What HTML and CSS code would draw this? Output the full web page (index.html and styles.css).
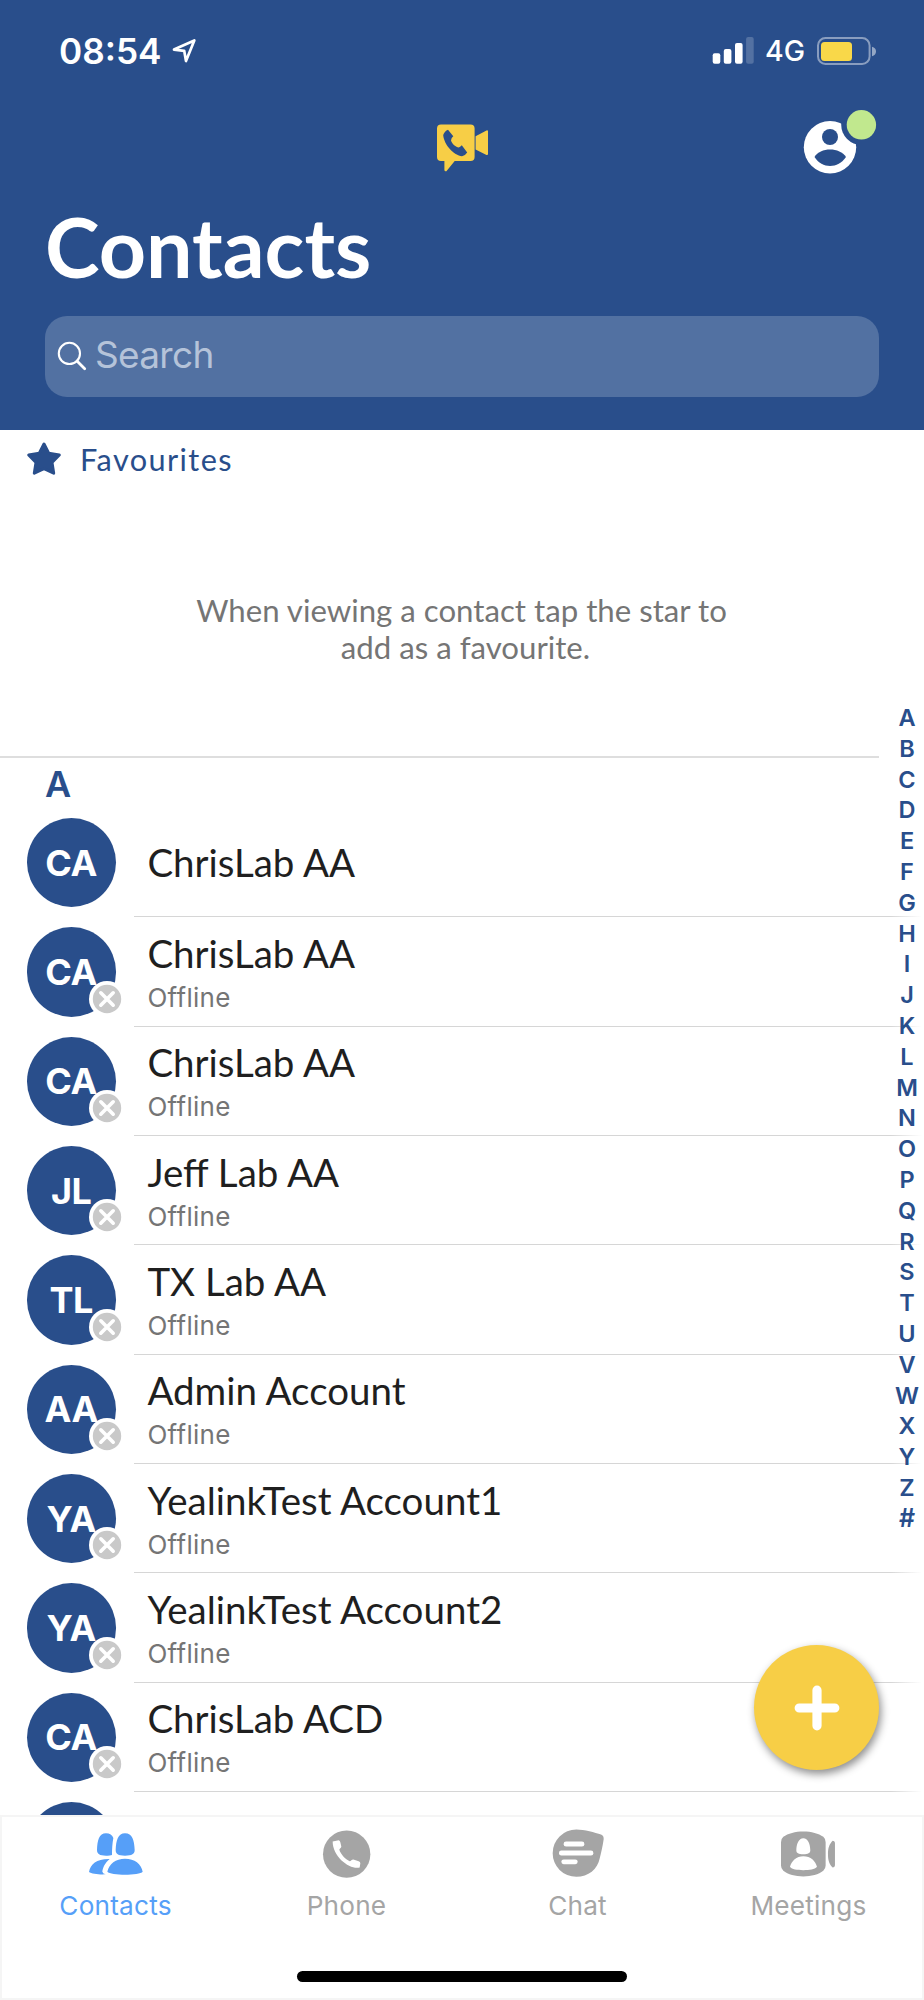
FILE: index.html
```html
<!DOCTYPE html>
<html lang="en">
<head>
<meta charset="utf-8">
<title>Contacts</title>
<link rel="stylesheet" href="styles.css">
</head>
<body>
<svg class="defs" width="0" height="0" aria-hidden="true">
  <symbol id="offline" viewBox="0 0 36 36">
    <circle cx="18" cy="18" r="18" fill="#fff"/>
    <circle cx="18" cy="18" r="14.2" fill="#c9c9c9"/>
    <path d="M11.8 11.8 24.2 24.2M24.2 11.8 11.8 24.2" stroke="#fff" stroke-width="3.6" stroke-linecap="round"/>
  </symbol>
</svg>
<div class="phone">
  <header class="header">
    <div class="status">
      <div class="status-left">
        <span class="time">08:54</span>
        <svg class="location" width="26" height="26" viewBox="170 38 26 26"><path d="M173 49.6 193.3 40.4 185 61 183.2 50.8Z" fill="none" stroke="#fff" stroke-width="2.7" stroke-linejoin="round"/></svg>
      </div>
      <div class="status-right">
        <svg width="42" height="27" viewBox="712 37 42 27" fill="#fff"><rect x="712.7" y="53.3" width="7.6" height="10.4" rx="2"/><rect x="723.8" y="49" width="7.6" height="14.7" rx="2"/><rect x="735" y="43" width="7.6" height="20.7" rx="2"/><rect x="746.1" y="37" width="7.6" height="26.7" rx="2" opacity=".2"/></svg>
        <span class="network">4G</span>
        <svg class="battery" width="60" height="30" viewBox="816 35 60 30"><rect x="818" y="37" width="51.6" height="26" rx="7.5" fill="none" stroke="#fff" stroke-opacity=".45" stroke-width="2"/><rect x="821" y="41" width="31" height="19" rx="3.5" fill="#f9d849"/><path d="M872 45.8Q876 47 876 50.5T872 55.2Z" fill="#fff" opacity=".5"/></svg>
      </div>
    </div>
    <div class="toolbar">
      <svg class="call-logo" width="52" height="48" viewBox="437 124 52 48"><path fill="#f7ce46" d="M441 124.4H470.5Q474.6 124.4 474.6 128.4V157Q474.6 161 470.5 161H454.7L446.4 171.2Q444.6 171.8 444.4 170V161H441Q437 161 437 157V128.4Q437 124.4 441 124.4ZM475.6 136.2 486.5 130.4Q488 130 488 131.5V154Q488 155.4 486.5 155L475.6 149.4Z"/><path fill="#294e8b" d="M448 129.8 453.3 136.3Q450.4 138.6 451 140.6C452 144 456 147.4 458.7 147.4Q460 147.2 461.8 145.2L467.2 152.4Q465 155.8 462 156.2C454 155.4 444 145 443.2 135Q444.6 131 448 129.8Z"/></svg>
      <svg class="profile" width="74" height="66" viewBox="803 109 74 66"><defs><mask id="cut"><rect x="803" y="109" width="74" height="66" fill="#fff"/><circle cx="861.4" cy="124.8" r="20.2" fill="#000"/><circle cx="830" cy="137" r="8" fill="#000"/><path d="M814.5 157C820 147 840 147 846 157C838 169 822 169 814.5 157Z" fill="#000"/></mask></defs><circle cx="830" cy="147.3" r="26.2" fill="#fff" mask="url(#cut)"/><circle cx="861.4" cy="124.8" r="14.7" fill="#c1e88e"/></svg>
    </div>
    <h1 class="title">Contacts</h1>
    <div class="search">
      <svg width="30" height="30" viewBox="57 341 30 30" fill="none" stroke="#fff"><circle cx="69.4" cy="353.4" r="10.6" stroke-width="2.1"/><path d="M77 361 84.7 368.7" stroke-width="2.8" stroke-linecap="round"/></svg>
      <span class="placeholder">Search</span>
    </div>
  </header>

  <main class="content">
    <section class="favourites">
      <div class="favourites-head">
        <svg width="36" height="34" viewBox="26 442 36 34"><path fill="#294e8b" stroke="#294e8b" stroke-width="3" stroke-linejoin="round" d="M44 444 48.7 453.3 59.3 455 52 462.4 53.7 473.2 44 468.6 34.3 473.2 36 462.4 28.7 455 39.3 453.3Z"/></svg>
        <span>Favourites</span>
      </div>
      <p class="hint">When viewing a contact tap the star to&nbsp;<br>add as a favourite.</p>
    </section>

    <section class="list">
      <h2 class="letter">A</h2>
      <div class="row"><div class="avatar">CA</div><div class="info"><span class="name">ChrisLab AA</span></div></div>
      <div class="row"><div class="avatar">CA<svg class="badge"><use href="#offline"/></svg></div><div class="info"><span class="name">ChrisLab AA</span><span class="state">Offline</span></div></div>
      <div class="row"><div class="avatar">CA<svg class="badge"><use href="#offline"/></svg></div><div class="info"><span class="name">ChrisLab AA</span><span class="state">Offline</span></div></div>
      <div class="row"><div class="avatar">JL<svg class="badge"><use href="#offline"/></svg></div><div class="info"><span class="name">Jeff Lab AA</span><span class="state">Offline</span></div></div>
      <div class="row"><div class="avatar">TL<svg class="badge"><use href="#offline"/></svg></div><div class="info"><span class="name">TX Lab AA</span><span class="state">Offline</span></div></div>
      <div class="row"><div class="avatar">AA<svg class="badge"><use href="#offline"/></svg></div><div class="info"><span class="name">Admin Account</span><span class="state">Offline</span></div></div>
      <div class="row"><div class="avatar">YA<svg class="badge"><use href="#offline"/></svg></div><div class="info"><span class="name">YealinkTest Account1</span><span class="state">Offline</span></div></div>
      <div class="row"><div class="avatar">YA<svg class="badge"><use href="#offline"/></svg></div><div class="info"><span class="name">YealinkTest Account2</span><span class="state">Offline</span></div></div>
      <div class="row"><div class="avatar">CA<svg class="badge"><use href="#offline"/></svg></div><div class="info"><span class="name">ChrisLab ACD</span><span class="state">Offline</span></div></div>
      <div class="row peek"><div class="avatar"></div><div class="info"><span class="name">ChrisLab Al</span></div></div>
    </section>

    <nav class="index">
      <span>A</span><span>B</span><span>C</span><span>D</span><span>E</span><span>F</span><span>G</span><span>H</span><span>I</span><span>J</span><span>K</span><span>L</span><span>M</span><span>N</span><span>O</span><span>P</span><span>Q</span><span>R</span><span>S</span><span>T</span><span>U</span><span>V</span><span>W</span><span>X</span><span>Y</span><span>Z</span><span class="hash">#</span>
    </nav>
    <button class="fab" aria-label="Add contact"><svg width="46" height="46" viewBox="0 0 46 46"><path d="M23 5.2V40.8M5.2 23H40.8" stroke="#fff" stroke-width="9.2" stroke-linecap="round"/></svg></button>
  </main>

  <footer class="tabbar">
    <div class="tabs">
      <div class="tab active">
        <svg width="53.7" height="48" viewBox="268 448 161 144"><path d="M319 458C330 458 338 463 341 472C338 488 337 505 337 523Q328 526 319 525C300 525 292 520 292 508C293 480 298 458 319 458ZM376 458C398 458 404 480 405 508C405 520 397 525 376 525C355 525 348 520 348 508C349 480 355 458 376 458ZM376 534C405 534 425 550 429 573C425 579 400 582 376 582C352 582 328 579 323 573C328 550 348 534 376 534ZM330 535C316 546 309 562 308 573Q310 579 318 581C300 582 275 580 268 574C272 550 292 534 330 535Z"/></svg>
        <span>Contacts</span>
      </div>
      <div class="tab">
        <svg width="48" height="48" viewBox="967 449.5 144 144"><circle cx="1038" cy="522" r="71"/><path fill="#fff" d="M996 484 1014 480Q1018 481 1019 486L1022 499C1022 504 1016 505 1016 509C1020 522 1034 538 1047 543C1051 543 1053 538 1058 538L1074 543Q1079 544 1079 549L1077 562C1050 570 996 532 996 484Z"/></svg>
        <span>Phone</span>
      </div>
      <div class="tab">
        <svg width="52" height="48" viewBox="271 149.5 156 144"><path d="M344 148C368 148 400 157 418 163Q427 167 426 177C423 198 418 218 414 235C408 267 380 290 344 290A71 71 0 0 1 344 148Z"/><g fill="#fff"><rect x="306" y="184" width="62" height="15" rx="7"/><rect x="292" y="211" width="103" height="15" rx="7"/><rect x="299" y="238" width="49" height="14" rx="7"/></g></svg>
        <span>Chat</span>
      </div>
      <div class="tab">
        <svg width="54.3" height="48" viewBox="959 149.5 163 144"><path d="M1026 154C1050 154 1072 160 1086 170Q1093 176 1093 186V256Q1093 266 1086 272C1072 283 1050 289 1026 289C1002 289 980 283 966 272Q959 266 959 256V186Q959 176 966 170C980 160 1002 154 1026 154ZM1114 182Q1121 182 1121 190V254Q1121 262 1114 262C1104 252 1100 240 1100 222C1100 204 1104 192 1114 182Z"/><path fill="#fff" d="M1026 174C1040 174 1047 192 1047 210C1047 219 1040 222 1026 222C1012 222 1005 219 1005 210C1005 192 1012 174 1026 174ZM1026 228C1048 228 1063 242 1067 260C1060 268 1045 270 1026 270C1007 270 992 268 986 260C990 242 1006 228 1026 228Z"/></svg>
        <span>Meetings</span>
      </div>
    </div>
    <div class="home"></div>
  </footer>
</div>
</body>
</html>
```

FILE: styles.css
```css
* { box-sizing: border-box; margin: 0; padding: 0; }
body { background: #fff; font-family: Inter, "Liberation Sans", sans-serif; }
svg { display: block; flex: none; overflow: visible; }
.defs { position: absolute; }

.phone { display: flex; flex-direction: column; width: 924px; height: 2000px; overflow: hidden; }

.header { flex: none; height: 430px; padding: 0 45px; background: #294e8b; color: #fff; }
.status { display: flex; justify-content: space-between; height: 100px; padding: 0 3px 0 14px; }
.status-left, .status-right { display: flex; align-items: center; height: 101px; }
.time { font-size: 35.2px; font-weight: 600; }
.location { margin: 1px 0 0 9px; }
.network { margin-left: 11px; font-size: 28.5px; font-weight: 500; }
.battery { margin-left: 11px; }
.toolbar { display: flex; justify-content: space-between; height: 102px; padding-left: 392px; }
.call-logo { margin-top: 24px; }
.profile { margin: 9px 2px 0 0; }
.title { height: 114px; font: 700 82.5px/90px Lato, sans-serif; }
.search { display: flex; align-items: center; height: 81px; padding: 0 12px 2px; border-radius: 22px; background: #5271a2; }
.placeholder { margin: -2px 0 0 8px; font-size: 37px; letter-spacing: -0.7px; color: #b5c3d9; }

.content { position: relative; flex: 1; min-height: 0; overflow: hidden; }
.favourites { width: 879px; height: 328px; border-bottom: 2px solid #dedede; }
.favourites-head { display: flex; align-items: center; gap: 18px; height: 58px; padding-left: 26px; font: 400 30.7px/58px Lato, sans-serif; letter-spacing: 1.4px; color: #294e8b; }
.favourites-head span { padding-top: 2px; }
.hint { padding: 104px 0 0 52px; font: 400 31.2px/37px Lato, sans-serif; text-align: center; color: #757575; }

.letter { height: 50px; padding-left: 45px; font-size: 36px; font-weight: 600; line-height: 53px; color: #294e8b; }
.row { display: flex; align-items: center; height: 109.35px; padding-left: 27px; }
.avatar { position: relative; flex: none; display: flex; align-items: center; justify-content: center; width: 89.4px; height: 89.4px; padding-right: 1px; border-radius: 50%; background: #294e8b; color: #fff; font-size: 36px; font-weight: 700; letter-spacing: -0.4px; }
.badge { position: absolute; left: 62.2px; top: 53.3px; width: 36px; height: 36px; }
.info { display: flex; flex: 1; flex-direction: column; justify-content: center; height: 109.35px; margin-left: 18px; padding: 2px 0 0 13px; background: linear-gradient(90deg, #d6d6d6 757px, #fff 788px) bottom / 100% 1px no-repeat; }
.name { font: 400 38.5px/46px Lato, sans-serif; color: #1f1f1f; }
.name:only-child { margin-bottom: 4px; }
.state { margin-top: 4px; font-size: 26px; line-height: 36px; letter-spacing: .3px; color: #757575; }
.peek .info { justify-content: flex-start; padding-top: 15px; }
.peek .name { color: #9a9a9a; }

.index { position: absolute; top: 272px; right: 0; display: grid; grid-auto-rows: 30.8px; width: 34px; font-size: 23.5px; font-weight: 600; line-height: 31px; text-align: center; color: #294e8b; }
.hash { font-size: 25px; }
.fab { position: absolute; left: 754px; top: 1215px; display: flex; align-items: center; justify-content: center; width: 125px; height: 125px; border: 0; border-radius: 50%; background: #f7ce46; box-shadow: 2px 4px 9px rgba(0, 0, 0, .45); }

.tabbar { position: relative; flex: none; display: flex; flex-direction: column; align-items: center; height: 185px; border: 2px solid #f5f5f5; background: #fff; }
.tabs { display: grid; grid-template-columns: repeat(4, 1fr); width: 924px; height: 154px; padding-top: 13px; }
.tab { display: flex; flex-direction: column; align-items: center; gap: 11px; color: #a5a5a5; fill: #a5a5a5; font-size: 26.2px; line-height: 34px; letter-spacing: .2px; }
.active { color: #569ff8; fill: #569ff8; }
.home { width: 330px; height: 11px; border-radius: 6px; background: #000; }
```
